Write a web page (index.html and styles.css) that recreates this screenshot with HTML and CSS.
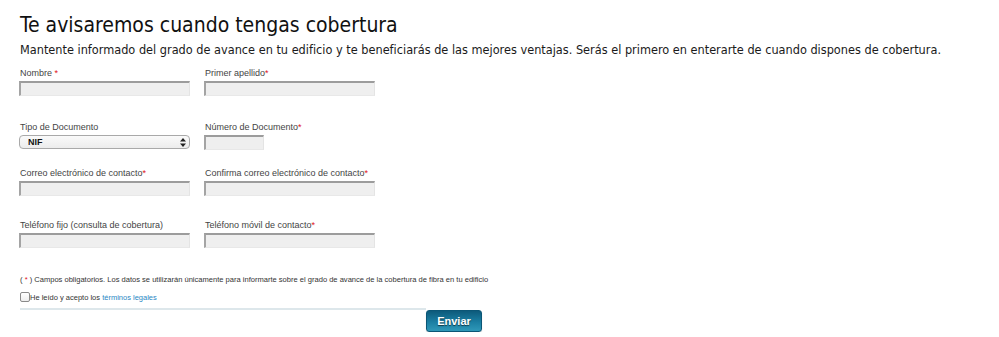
FILE: index.html
```html
<!DOCTYPE html>
<html lang="es">
<head>
<meta charset="utf-8">
<title>Te avisaremos cuando tengas cobertura</title>
<link rel="stylesheet" href="styles.css">
</head>
<body>
<div class="page">
  <h1 class="title">Te avisaremos cuando tengas cobertura</h1>
  <p class="intro">Mantente informado del grado de avance en tu edificio y te beneficiarás de las mejores ventajas. Serás el primero en enterarte de cuando dispones de cobertura.</p>

  <form class="form">
    <div class="row row-1">
      <div class="field">
        <label class="label">Nombre <span class="req">*</span></label>
        <input class="input" type="text">
      </div>
      <div class="field">
        <label class="label">Primer apellido<span class="req">*</span></label>
        <input class="input" type="text">
      </div>
    </div>

    <div class="row row-2">
      <div class="field">
        <label class="label">Tipo de Documento</label>
        <div class="select-wrap">
          <select class="select"><option>NIF</option></select>
          <svg class="select-arrows" width="6" height="9" viewBox="0 0 6 9"><path d="M3 0 L6 3.5 H0 Z M3 9 L6 5.5 H0 Z" fill="#222"/></svg>
        </div>
      </div>
      <div class="field">
        <label class="label">Número de Documento<span class="req">*</span></label>
        <input class="input input-short" type="text">
      </div>
    </div>

    <div class="row row-3">
      <div class="field">
        <label class="label">Correo electrónico de contacto<span class="req">*</span></label>
        <input class="input" type="text">
      </div>
      <div class="field">
        <label class="label">Confirma correo electrónico de contacto<span class="req">*</span></label>
        <input class="input" type="text">
      </div>
    </div>

    <div class="row row-4">
      <div class="field">
        <label class="label">Teléfono fijo (consulta de cobertura)</label>
        <input class="input" type="text">
      </div>
      <div class="field">
        <label class="label">Teléfono móvil de contacto<span class="req">*</span></label>
        <input class="input" type="text">
      </div>
    </div>

    <p class="note">( <span class="req">*</span> ) Campos obligatorios. Los datos se utilizarán únicamente para informarte sobre el grado de avance de la cobertura de fibra en tu edificio</p>

    <label class="accept"><input class="check" type="checkbox"><span>He leído y acepto los <a class="link" href="#">términos legales</a></span></label>

    <div class="footer">
      <div class="rule"></div>
      <button class="btn" type="button">Enviar</button>
    </div>
  </form>
</div>
</body>
</html>
```

FILE: styles.css
```css
html, body {
  margin: 0;
  padding: 0;
  background: #ffffff;
}

.page {
  padding: 13px 0 0 20px;
}

.title {
  margin: 0;
  font-family: "DejaVu Sans Condensed", "DejaVu Sans", Verdana, sans-serif;
  font-stretch: condensed;
  font-weight: normal;
  font-size: 21px;
  line-height: 24px;
  color: #111111;
}

.intro {
  margin: 5px 0 0 0;
  font-family: "DejaVu Sans Condensed", "DejaVu Sans", Verdana, sans-serif;
  font-stretch: condensed;
  font-size: 12.6px;
  line-height: 16px;
  color: #1a1a1a;
  white-space: nowrap;
}

.form {
  margin: 10px 0 0 -1px;
}

.row {
  display: grid;
  grid-template-columns: 171px 171px;
  column-gap: 14px;
  align-items: start;
}

.row-2 { margin-top: 26px; }
.row-3 { margin-top: 18px; }
.row-4 { margin-top: 24px; }

.field {
  display: flex;
  flex-direction: column;
  align-items: flex-start;
}

.label {
  display: block;
  height: 11px;
  margin: 0 0 2px 1px;
  font-family: "Liberation Sans", Arial, sans-serif;
  font-size: 9px;
  line-height: 11px;
  color: #444444;
  white-space: nowrap;
}

.req {
  color: #e0101a;
}

.input {
  box-sizing: border-box;
  display: block;
  width: 171px;
  height: 15px;
  margin: 0;
  padding: 0 3px;
  background: #efefef;
  border-style: solid;
  border-width: 2px 1px 1px 2px;
  border-color: #9c9c9c #e4e4e4 #e8e8e8 #a4a4a4;
  font-family: "Liberation Sans", Arial, sans-serif;
  font-size: 9px;
}

.input-short {
  width: 60px;
}

.select-wrap {
  position: relative;
  width: 171px;
  height: 14px;
}

.select {
  box-sizing: border-box;
  display: block;
  -webkit-appearance: none;
  appearance: none;
  width: 171px;
  height: 14px;
  margin: 0;
  padding: 0 0 0 8px;
  border: 1px solid #a9a9a9;
  border-radius: 4px;
  background: linear-gradient(#fafafa, #ececec);
  font-family: "Liberation Sans", Arial, sans-serif;
  font-size: 9px;
  font-weight: bold;
  line-height: 12px;
  color: #111111;
}

.select-arrows {
  position: absolute;
  right: 4px;
  top: 3px;
}

.note {
  margin: 27px 0 0 1px;
  font-family: "Liberation Sans", Arial, sans-serif;
  font-size: 7.55px;
  line-height: 9px;
  color: #333333;
  white-space: nowrap;
}

.accept {
  display: flex;
  align-items: center;
  margin-top: 8px;
  height: 10px;
  font-family: "Liberation Sans", Arial, sans-serif;
  font-size: 7.5px;
  color: #333333;
  white-space: nowrap;
}

.check {
  box-sizing: border-box;
  -webkit-appearance: none;
  appearance: none;
  width: 10px;
  height: 10px;
  margin: 0 0 0 1px;
  border: 1px solid #8a8a8a;
  border-radius: 2px;
  background: linear-gradient(#ffffff, #eeeeee);
}

.link {
  color: #2a87c4;
  text-decoration: none;
}

.footer {
  display: flex;
  align-items: flex-start;
  margin-top: 6px;
  margin-left: 1px;
}

.rule {
  width: 406px;
  height: 2px;
  background: #dde7eb;
}

.btn {
  box-sizing: border-box;
  width: 56px;
  height: 22px;
  margin: 2px 0 0 0;
  padding: 0;
  border: 1px solid #0b5676;
  border-radius: 3px;
  background: linear-gradient(#0d5a7b, #1b7fa3 55%, #2f98b8);
  font-family: "Liberation Sans", Arial, sans-serif;
  font-size: 11px;
  font-weight: bold;
  color: #ffffff;
  text-shadow: 0 1px 1px rgba(0, 0, 0, 0.6);
  box-shadow: 0 1px 1px rgba(0, 0, 0, 0.2);
}
```
